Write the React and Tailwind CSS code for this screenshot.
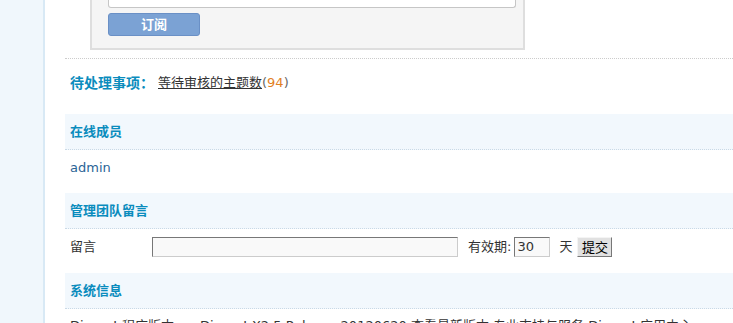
import React from 'react';

const latin = { fontFamily: '"DejaVu Sans", "Noto Sans CJK SC", sans-serif' };

function SectionHeader({ title }) {
  return (
    <div className="h-[36px] flex items-center pl-[5px] bg-[#f2f8fd] border-b border-dotted border-[#c9d9e6] text-[13px] font-bold text-[#0a8cbd]">
      {title}
    </div>
  );
}

function Field({ className, children }) {
  return (
    <div
      className={`h-[20px] bg-[#f9f9f9] border border-t-[#777] border-l-[#777] border-b-[#ccc] border-r-[#ccc] text-[13px] leading-[18px] pl-[2px] text-[#333] ${className}`}
    >
      {children}
    </div>
  );
}

export default function App() {
  return (
    <div className="w-[733px] h-[323px] overflow-hidden bg-white flex text-[#333]" style={latin}>
      <div className="w-[45px] shrink-0 bg-[#f0f7fc] border-r-2 border-[#d8e9f5]" />

      <div className="flex-1 pl-[20px] flex flex-col">
        <div className="ml-[25px] w-[435px] h-[50px] shrink-0 bg-[#f5f5f5] border-l-2 border-r-2 border-b-2 border-[#dedede] pl-[16px]">
          <div className="w-[408px] h-[8px] bg-white border border-t-0 border-[#c6c6c6] rounded-b-[3px]" />
          <button className="mt-[5px] w-[92px] h-[23px] bg-[#7ba2d4] border border-[#6a90c6] rounded-[3px] text-white text-[13px] font-bold leading-none">
            订阅
          </button>
        </div>

        <div className="mt-[8px] border-t border-dotted border-[#cccccc]" />
        <div className="h-[48px] flex items-center pl-[5px] shrink-0">
          <span className="text-[14px] font-bold text-[#0a8cbd]">待处理事项：</span>
          <span className="ml-[4px] text-[13px] text-[#333] underline">等待审核的主题数</span>
          <span className="text-[13px] text-[#666]">(</span>
          <span className="text-[13px] text-[#e2801f]">94</span>
          <span className="text-[13px] text-[#666]">)</span>
        </div>

        <div className="mt-[7px]">
          <SectionHeader title="在线成员" />
          <div className="h-[36px] flex items-center pl-[5px] text-[13px] text-[#2a6496]">admin</div>
        </div>

        <div className="mt-[7px]">
          <SectionHeader title="管理团队留言" />
          <div className="h-[36px] flex items-center pl-[5px] text-[13px]">
            <span className="w-[82px]">留言</span>
            <Field className="w-[306px]" />
            <span className="ml-[10px]">有效期:</span>
            <Field className="ml-[3px] w-[36px]">30</Field>
            <span className="ml-[9px]">天</span>
            <button className="ml-[5px] w-[35px] h-[20px] bg-[#e1e1e1] border border-t-[#f4f4f4] border-l-[#f4f4f4] border-b-[#777] border-r-[#777] text-[13px] leading-none text-black">
              提交
            </button>
          </div>
        </div>

        <div className="mt-[8px]">
          <SectionHeader title="系统信息" />
          <div className="h-[34px] flex items-center pl-[5px] text-[13px] whitespace-nowrap">
            <span className="w-[130px]">Discuz! 程序版本</span>
            <span>Discuz! X2.5 Release 20120620 查看最新版本 专业支持与服务 Discuz! 应用中心</span>
          </div>
        </div>
      </div>
    </div>
  );
}
